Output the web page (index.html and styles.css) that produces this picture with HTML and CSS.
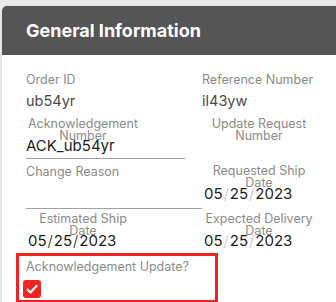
FILE: index.html
```html
<!DOCTYPE html>
<html lang="en">
  <head>
    <meta charset="UTF-8" />
    <meta name="viewport" content="width=device-width, initial-scale=1.0" />
    <title>General Information</title>
    <link rel="stylesheet" href="styles.css">
  </head>
  <body>
    <section class="card">
      <header class="card_header">
        <h2>General Information</h2>
      </header>

      <div class="card_body">
        <!-- row 1 -->
        <div class="field">
          <p class="field_label">Order ID</p>
          <p class="field_value">ub54yr</p>
        </div>
        <div class="field">
          <p class="field_label">Reference Number</p>
          <p class="field_value">il43yw</p>
        </div>

        <!-- row 2 -->
        <div class="field input underline">
          <p class="float_label">Acknowledgement Number</p>
          <p class="input_value">ACK_ub54yr</p>
        </div>
        <div class="field input">
          <p class="float_label">Update Request Number</p>
        </div>

        <!-- row 3 -->
        <div class="field textarea underline">
          <p class="field_label">Change Reason</p>
        </div>
        <div class="field input requested">
          <p class="float_label">Requested Ship Date</p>
          <p class="input_value date">05<span class="sep light">/</span>25<span class="sep light">/</span>2023</p>
        </div>

        <!-- row 4 -->
        <div class="field input date_field">
          <p class="float_label">Estimated Ship Date</p>
          <p class="input_value date">05<span class="sep">/</span>25<span class="sep">/</span>2023</p>
        </div>
        <div class="field input date_field">
          <p class="float_label">Expected Delivery Date</p>
          <p class="input_value date">05<span class="sep light">/</span>25<span class="sep light">/</span>2023</p>
        </div>

        <!-- row 5 -->
        <div class="highlight">
          <p class="field_label">Acknowledgement Update?</p>
          <span class="checkbox">
            <svg width="18" height="18" viewBox="0 0 18 18">
              <polyline points="4.5,9.5 7.5,12.5 13.5,6" fill="none" stroke="#fff" stroke-width="2.2" stroke-linecap="round" stroke-linejoin="round" />
            </svg>
          </span>
        </div>
      </div>
    </section>
  </body>
</html>
```

FILE: styles.css
```css
/* variables */
:root {
  --pageColor: #ebebeb;
  --headerColor: #555555;
  --labelColor: #8a8a8a;
  --valueColor: #4a4a4a;
  --inputColor: #1c1c1c;
  --lineColor: #a0a0a0;
  --alertColor: #f02222;
}

/* base */
*,
::before,
::after {
  box-sizing: border-box;
  margin: 0;
  padding: 0;
}
body {
  background-color: var(--pageColor);
  font-family: Inter, "Noto Sans", sans-serif;
  overflow: hidden;
  height: 302px;
}

/* card */
.card {
  margin: 6px 0 0 2px;
  width: 360px;
  height: 400px;
  background-color: white;
  border-radius: 5px 5px 0 0;
  box-shadow: 0 0 2px rgba(0, 0, 0, 0.15);
}
.card_header {
  height: 49px;
  display: flex;
  align-items: center;
  padding-left: 24px;
  background-color: var(--headerColor);
  border-radius: 5px 5px 0 0;
}
.card_header h2 {
  color: white;
  font-size: 18px;
  font-weight: 700;
}
.card_body {
  display: grid;
  grid-template-columns: 176px 176px;
  padding: 16px 0 0 24px;
}

/* fields */
.field {
  height: 44px;
  padding-top: 1px;
}
.field_label {
  color: var(--labelColor);
  font-size: 12.5px;
  line-height: 16px;
}
.field_value {
  margin-top: 3px;
  color: var(--valueColor);
  font-size: 14.5px;
  line-height: 20px;
}
.input {
  width: 159px;
  padding-top: 0;
}
.float_label {
  width: 114px;
  text-align: center;
  color: var(--labelColor);
  font-size: 12.5px;
  line-height: 12px;
  margin-top: 3px;
}
.input_value {
  margin-top: -6px;
  color: var(--inputColor);
  font-size: 15px;
  line-height: 20px;
}
.underline {
  border-bottom: 1px solid var(--lineColor);
}
.textarea {
  height: 50px;
  padding-top: 5px;
}
.requested {
  height: 50px;
}
.requested .float_label {
  margin-top: 6px;
}
.requested .input_value {
  margin-top: -5px;
}
.date {
  padding-left: 2px;
}
.sep {
  display: inline-block;
  margin: 0 1px;
  font-weight: 300;
}
.sep.light {
  color: #c4c4c4;
}
.date_field {
  height: 44px;
}
.date_field .float_label {
  margin-top: 4px;
}

/* highlighted checkbox row */
.highlight {
  grid-column: 1 / 2;
  margin-left: -10px;
  width: 202px;
  height: 50px;
  border: 3px solid var(--alertColor);
  padding: 3px 0 0 7px;
}
.checkbox {
  display: block;
  width: 18px;
  height: 18px;
  margin: 5px 0 0 -3px;
  border-radius: 3px;
  background-color: var(--alertColor);
}
.checkbox svg {
  display: block;
}
```
